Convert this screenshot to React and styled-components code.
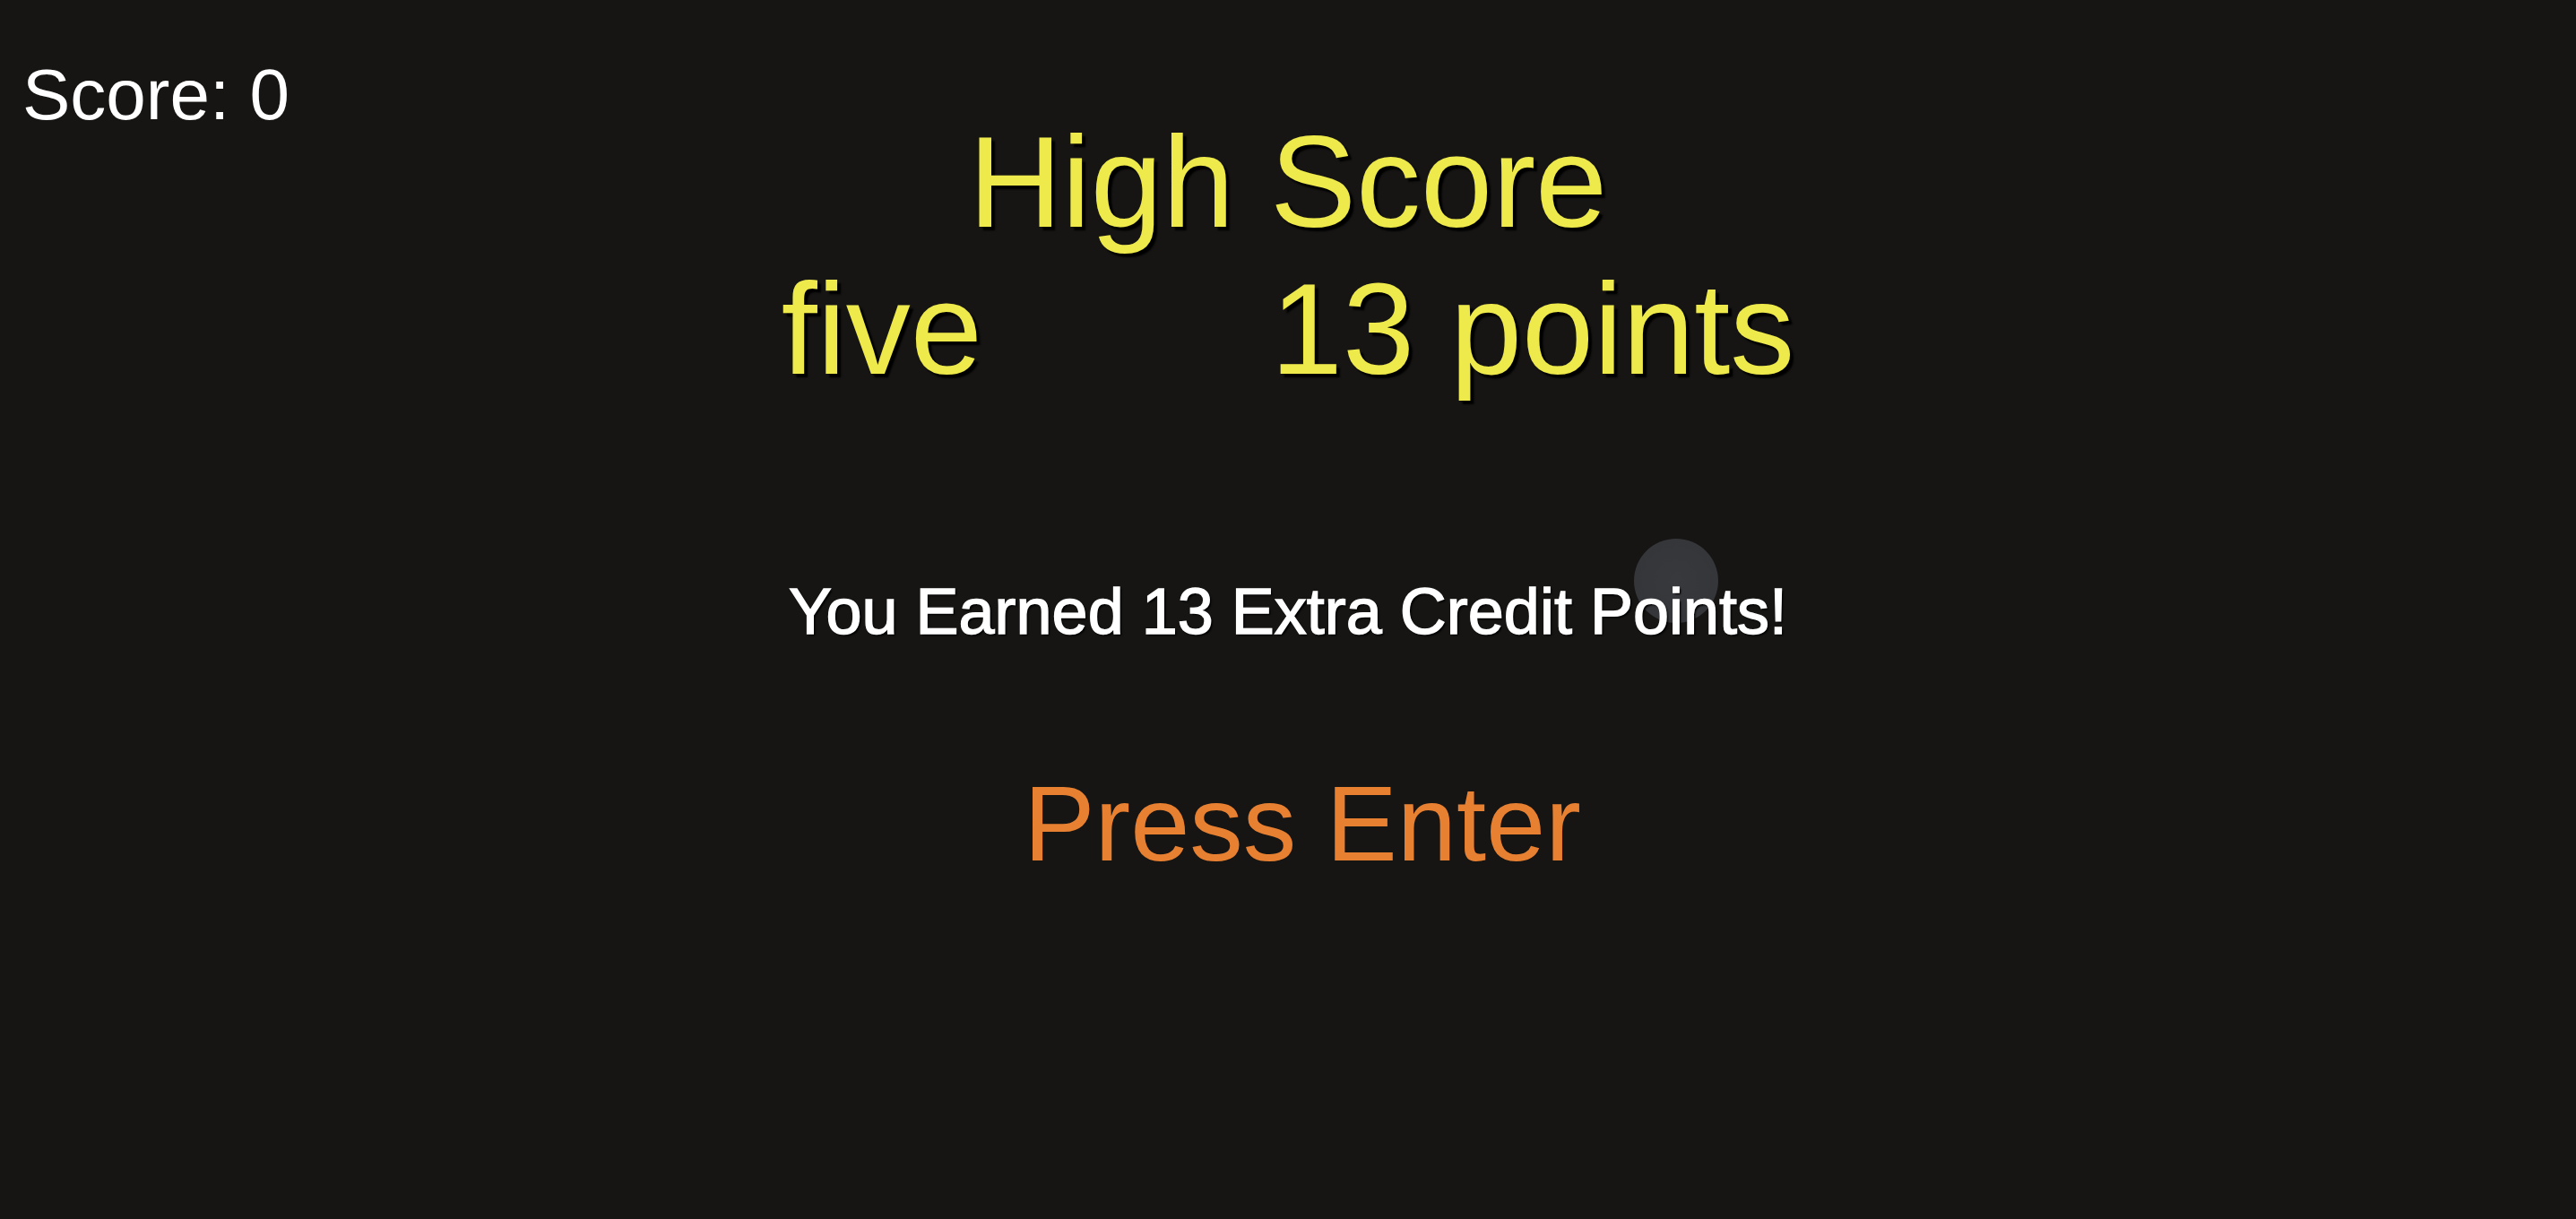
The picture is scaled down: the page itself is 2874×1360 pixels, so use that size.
import React from "react"
import styled, { createGlobalStyle } from "styled-components"

const GlobalStyle = createGlobalStyle`
  html, body {
    margin: 0;
    padding: 0;
    background: #161514;
  }
  body {
    font-family: "Liberation Sans", Arial, Helvetica, sans-serif;
  }
`

const Screen = styled.div`
  position: relative;
  isolation: isolate;
  min-height: 100vh;
  background: #161514;
  overflow: hidden;
`

const ScoreLabel = styled.div`
  padding: 66px 0 0 25px;
  font-size: 80px;
  line-height: 1;
  color: #ffffff;
`

const Board = styled.main`
  display: flex;
  flex-direction: column;
  align-items: center;
  margin-top: -14px;
`

const Title = styled.h1`
  margin: 0;
  font-size: 144px;
  font-weight: 400;
  line-height: 1;
  color: #eeea4b;
  text-shadow: 4px 4px 2px #000;
`

const EntryRow = styled.div`
  display: flex;
  justify-content: center;
  gap: 322px;
  margin-top: 20px;
`

const EntryCell = styled.span`
  font-size: 144px;
  line-height: 1;
  color: #eeea4b;
  text-shadow: 4px 4px 2px #000;
`

const Message = styled.p`
  margin: 206px 0 0;
  font-size: 72px;
  line-height: 1;
  color: #ffffff;
  -webkit-text-stroke: 1.4px #ffffff;
  text-shadow: 2px 2px 2px #000;
`

const Prompt = styled.p`
  margin: 141px 0 0;
  padding-left: 32px;
  font-size: 119px;
  line-height: 1;
  color: #e88032;
`

const CursorDot = styled.div`
  position: absolute;
  left: ${props => props.x - props.size / 2}px;
  top: ${props => props.y - props.size / 2}px;
  width: ${props => props.size}px;
  height: ${props => props.size}px;
  border-radius: 50%;
  background: radial-gradient(circle, #38393c 0%, #35363a 70%, rgba(53, 54, 58, 0) 100%);
  z-index: -1;
  pointer-events: none;
`

export default function App() {
  return (
    <>
      <GlobalStyle />
      <Screen>
        <CursorDot x={1870} y={648} size={94} />
        <ScoreLabel>Score: 0</ScoreLabel>
        <Board>
          <Title>High Score</Title>
          <EntryRow>
            <EntryCell>five</EntryCell>
            <EntryCell>13 points</EntryCell>
          </EntryRow>
          <Message>You Earned 13 Extra Credit Points!</Message>
          <Prompt>Press Enter</Prompt>
        </Board>
      </Screen>
    </>
  )
}
